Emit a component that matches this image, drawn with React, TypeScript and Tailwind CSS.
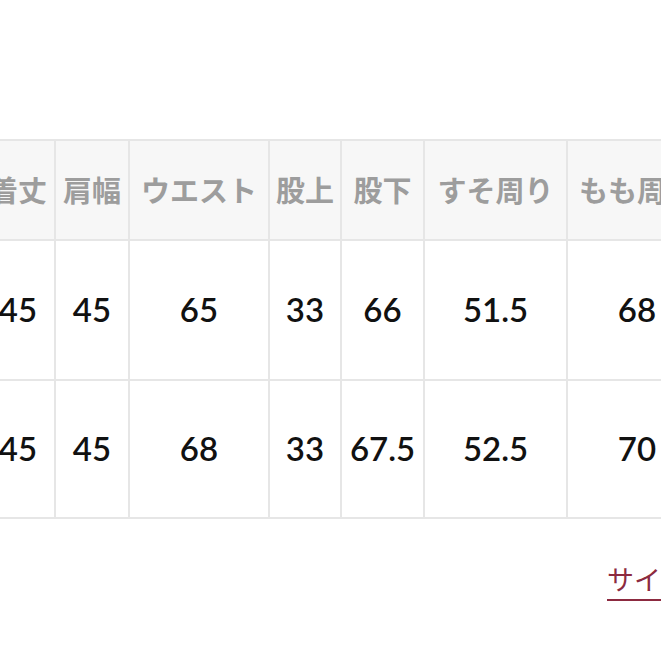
import React from "react";

const widths = [74, 74, 140, 72, 83, 143, 140];
const headers = ["着丈", "肩幅", "ウエスト", "股上", "股下", "すそ周り", "もも周り"];
const rows = [
  ["45", "45", "65", "33", "66", "51.5", "68"],
  ["45", "45", "68", "33", "67.5", "52.5", "70"],
];

export default function App() {
  return (
    <div className="w-[661px] h-[661px] overflow-hidden bg-white">
      <div className="pt-[139px]">
        <div className="-ml-[20px] flex flex-col w-max">
          <div className="flex h-[100px] border-t-2 border-[#e6e6e6] bg-[#f7f7f7]">
            {headers.map((h, i) => (
              <div
                key={i}
                style={{ width: widths[i] }}
                className="shrink-0 border-l-2 border-[#e6e6e6] flex items-center justify-center whitespace-nowrap text-[29px] font-bold text-[#9d9d9d] [font-family:'Noto_Sans_CJK_JP',sans-serif]"
              >
                {h}
              </div>
            ))}
          </div>
          {rows.map((r, ri) => (
            <div
              key={ri}
              className={
                ri === rows.length - 1
                  ? "flex h-[140px] border-t-2 border-b-2 border-[#e6e6e6] bg-white"
                  : "flex h-[140px] border-t-2 border-[#e6e6e6] bg-white"
              }
            >
              {r.map((v, i) => (
                <div
                  key={i}
                  style={{ width: widths[i] }}
                  className="shrink-0 border-l-2 border-[#e6e6e6] flex items-center justify-center whitespace-nowrap text-[33px] font-semibold text-[#111111] [font-family:Lato,sans-serif]"
                >
                  {v}
                </div>
              ))}
            </div>
          ))}
        </div>
        <div className="mt-[42px] pl-[607px] whitespace-nowrap">
          <span className="text-[27px] leading-[36px] text-[#8c2a40] underline decoration-2 underline-offset-[9px] [font-family:'Noto_Sans_CJK_JP',sans-serif]">
            サイズガイド
          </span>
        </div>
      </div>
    </div>
  );
}
